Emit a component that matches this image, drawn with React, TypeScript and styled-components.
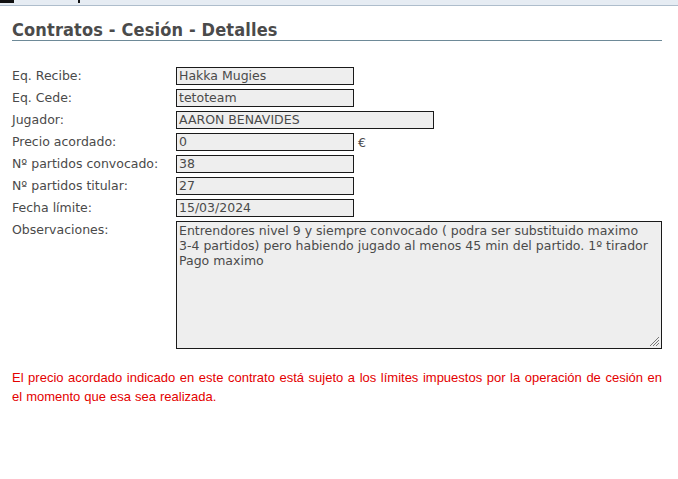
import React from "react";
import styled, { createGlobalStyle } from "styled-components";

const Global = createGlobalStyle`
  html, body { margin: 0; padding: 0; background: #ffffff; }
  body { font-family: "DejaVu Sans", Verdana, sans-serif; }
`;

const Page = styled.div`
  width: 678px;
  height: 479px;
  overflow: hidden;
  background: #fff;
`;

const TopStrip = styled.div`
  height: 5px;
  background: #e6ecf3;
  border-bottom: 1px solid #aebdcc;
  position: relative;
`;

const TopMark = styled.span<{ $left: number; $w: number }>`
  position: absolute;
  top: 0;
  left: ${(p) => p.$left}px;
  width: ${(p) => p.$w}px;
  height: 3px;
  background: #111;
`;

const Content = styled.div`
  padding: 12px 16px 0 12px;
`;

const Title = styled.h1`
  margin: 0;
  font-family: "DejaVu Sans Condensed", "DejaVu Sans", sans-serif;
  font-stretch: condensed;
  font-weight: bold;
  font-size: 18px;
  line-height: 21px;
  color: #4b4b4b;
  border-bottom: 1px solid #6e8a98;
  padding: 1px 0 0 0;
  letter-spacing: 0.15px;
`;

const Form = styled.div`
  margin-top: 26px;
  display: grid;
  grid-template-columns: 164px auto;
  row-gap: 4px;
  align-items: start;
  font-size: 12.5px;
`;

const Label = styled.div`
  line-height: 18px;
  color: #4a4a4a;
`;

const Field = styled.div`
  display: flex;
  align-items: center;
  gap: 4px;
`;

const Input = styled.div<{ $w: number }>`
  box-sizing: border-box;
  width: ${(p) => p.$w}px;
  height: 18px;
  border: 1px solid #1a1a1a;
  background: #eeeeee;
  line-height: 16px;
  color: #4a4a4a;
  padding: 0 2px;
  white-space: nowrap;
`;

const Unit = styled.span`
  color: #4a4a4a;
`;

const TextArea = styled.div`
  box-sizing: border-box;
  width: 486px;
  height: 128px;
  border: 1px solid #1a1a1a;
  background: #eeeeee;
  line-height: 15px;
  color: #4a4a4a;
  padding: 1px 2px;
  position: relative;
  white-space: nowrap;
`;

const Grip = styled.svg`
  position: absolute;
  right: 1px;
  bottom: 1px;
`;

const Notice = styled.p`
  margin: 19px 0 0 0;
  font-family: "Liberation Sans", Arial, sans-serif;
  font-size: 13px;
  line-height: 19px;
  word-spacing: 0.4px;
  color: #e40000;
  text-align: justify;
`;

const rows: { label: string; value: string; w: number; unit?: string }[] = [
  { label: "Eq. Recibe:", value: "Hakka Mugies", w: 178 },
  { label: "Eq. Cede:", value: "tetoteam", w: 178 },
  { label: "Jugador:", value: "AARON BENAVIDES", w: 258 },
  { label: "Precio acordado:", value: "0", w: 178, unit: "€" },
  { label: "Nº partidos convocado:", value: "38", w: 178 },
  { label: "Nº partidos titular:", value: "27", w: 178 },
  { label: "Fecha límite:", value: "15/03/2024", w: 178 },
];

export default function App() {
  return (
    <Page>
      <Global />
      <TopStrip>
        <TopMark $left={0} $w={14} />
        <TopMark $left={78} $w={2} />
      </TopStrip>
      <Content>
        <Title>Contratos - Cesión - Detalles</Title>
        <Form>
          {rows.map((r) => (
            <React.Fragment key={r.label}>
              <Label>{r.label}</Label>
              <Field>
                <Input $w={r.w}>{r.value}</Input>
                {r.unit && <Unit>{r.unit}</Unit>}
              </Field>
            </React.Fragment>
          ))}
          <Label>Observaciones:</Label>
          <TextArea>
            Entrendores nivel 9 y siempre convocado ( podra ser substituido maximo
            <br />
            3-4 partidos) pero habiendo jugado al menos 45 min del partido. 1º tirador
            <br />
            Pago maximo
            <Grip width="12" height="12" viewBox="0 0 12 12">
              <path d="M11 2 L2 11 M11 5 L5 11 M11 8 L8 11" stroke="#777" strokeWidth="1" />
            </Grip>
          </TextArea>
        </Form>
        <Notice>
          El precio acordado indicado en este contrato está sujeto a los límites impuestos por la operación de cesión en el momento que esa sea realizada.
        </Notice>
      </Content>
    </Page>
  );
}
